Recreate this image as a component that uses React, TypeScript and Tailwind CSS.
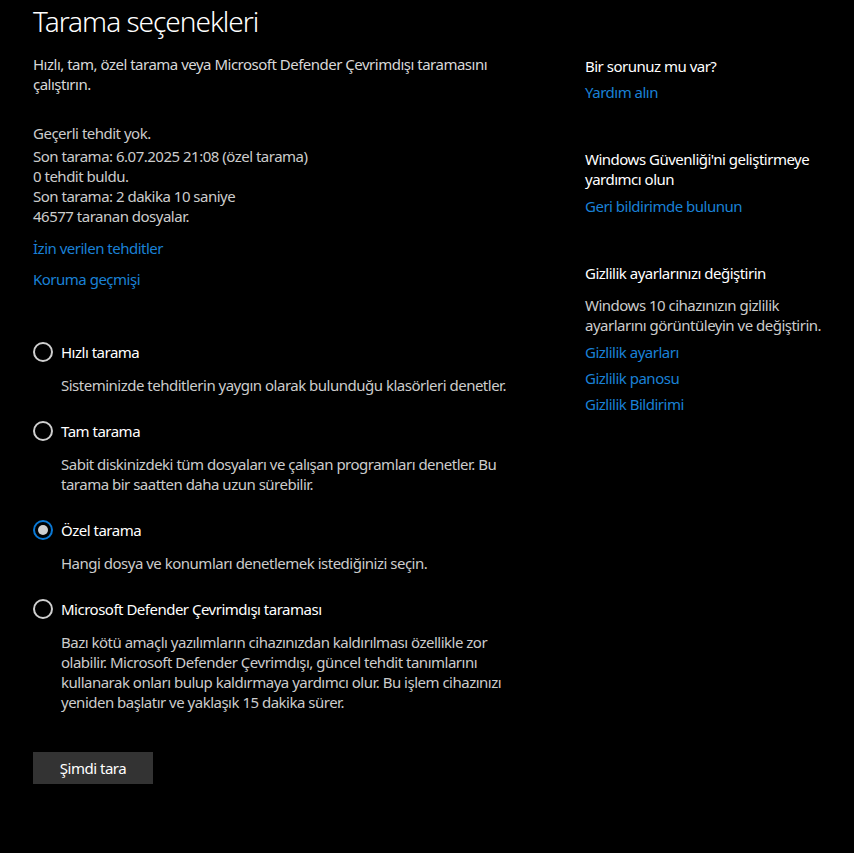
const font = { fontFamily: '"Noto Sans", "Open Sans", sans-serif' };

type Option = { id: string; label: string; desc: string[] };

const options: Option[] = [
  { id: "quick", label: "Hızlı tarama", desc: ["Sisteminizde tehditlerin yaygın olarak bulunduğu klasörleri denetler."] },
  {
    id: "full",
    label: "Tam tarama",
    desc: ["Sabit diskinizdeki tüm dosyaları ve çalışan programları denetler. Bu", "tarama bir saatten daha uzun sürebilir."],
  },
  { id: "custom", label: "Özel tarama", desc: ["Hangi dosya ve konumları denetlemek istediğinizi seçin."] },
  {
    id: "offline",
    label: "Microsoft Defender Çevrimdışı taraması",
    desc: [
      "Bazı kötü amaçlı yazılımların cihazınızdan kaldırılması özellikle zor",
      "olabilir. Microsoft Defender Çevrimdışı, güncel tehdit tanımlarını",
      "kullanarak onları bulup kaldırmaya yardımcı olur. Bu işlem cihazınızı",
      "yeniden başlatır ve yaklaşık 15 dakika sürer.",
    ],
  },
];

const Radio = ({ checked }: { checked: boolean }) =>
  checked ? (
    <span className="flex h-5 w-5 shrink-0 items-center justify-center rounded-full border-2 border-[#0a78d4]">
      <span className="h-[10px] w-[10px] rounded-full bg-[#d0d0d0]" />
    </span>
  ) : (
    <span className="h-5 w-5 shrink-0 rounded-full border-2 border-[#cfcfcf]" />
  );

const Link = ({ children, className = "" }: { children: React.ReactNode; className?: string }) => (
  <a className={`block text-[#1a80d6] leading-5 ${className}`}>{children}</a>
);

export default function App() {
  const selected = "custom";
  return (
    <div className="min-h-[853px] w-full bg-black text-[15px] tracking-[-0.5px] antialiased" style={font}>
      <div className="flex">
        {/* left column */}
        <div className="w-[552px] shrink-0 pl-[33px]">
          <h1 className="pt-[3px] text-[28px] font-light leading-9 tracking-[-1px] text-white">Tarama seçenekleri</h1>
          <p className="mt-[15px] leading-5 text-[#d8d8d8]">
            Hızlı, tam, özel tarama veya Microsoft Defender Çevrimdışı taramasını
            <br />
            çalıştırın.
          </p>
          <p className="mt-[29px] leading-5 text-[#cccccc]">Geçerli tehdit yok.</p>
          <div className="mt-[3px] leading-5 text-[#cccccc]">
            <p>Son tarama: 6.07.2025 21:08 (özel tarama)</p>
            <p>0 tehdit buldu.</p>
            <p>Son tarama: 2 dakika 10 saniye</p>
            <p>46577 taranan dosyalar.</p>
          </div>
          <Link className="mt-3">İzin verilen tehditler</Link>
          <Link className="mt-[11px]">Koruma geçmişi</Link>

          <div className="mt-[53px] flex flex-col gap-[26px]">
            {options.map((o) => (
              <div key={o.id}>
                <label className="flex h-5 items-center gap-[8px]">
                  <Radio checked={o.id === selected} />
                  <span className="leading-5 text-white">{o.label}</span>
                </label>
                <div className="mt-[13px] pl-[28px] leading-5 text-[#cccccc]">
                  {o.desc.map((d) => (
                    <p key={d}>{d}</p>
                  ))}
                </div>
              </div>
            ))}
          </div>

          <button className="mt-10 h-8 w-[120px] bg-[#333333] text-white">Şimdi tara</button>
        </div>

        {/* right column */}
        <div className="pl-[33px] pt-[56px]">
          <p className="leading-5 text-white">Bir sorunuz mu var?</p>
          <Link className="mt-[6px]">Yardım alın</Link>

          <p className="mt-[47px] leading-5 text-white">
            Windows Güvenliği'ni geliştirmeye
            <br />
            yardımcı olun
          </p>
          <Link className="mt-[7px]">Geri bildirimde bulunun</Link>

          <p className="mt-[47px] leading-5 text-white">Gizlilik ayarlarınızı değiştirin</p>
          <p className="mt-3 leading-5 text-[#cccccc]">
            Windows 10 cihazınızın gizlilik
            <br />
            ayarlarını görüntüleyin ve değiştirin.
          </p>
          <Link className="mt-[7px]">Gizlilik ayarları</Link>
          <Link className="mt-[6px]">Gizlilik panosu</Link>
          <Link className="mt-[6px]">Gizlilik Bildirimi</Link>
        </div>
      </div>
    </div>
  );
}
